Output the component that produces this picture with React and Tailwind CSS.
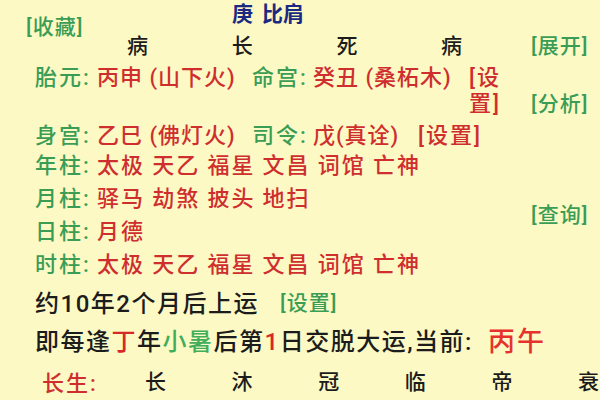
const pillars = [
    { label: '年柱:', words: ['太极', '天乙', '福星', '文昌', '词馆', '亡神'] },
    { label: '月柱:', words: ['驿马', '劫煞', '披头', '地扫'] },
    { label: '日柱:', words: ['月德'] },
    { label: '时柱:', words: ['太极', '天乙', '福星', '文昌', '词馆', '亡神'] },
];

const stages = ['长', '沐', '冠', '临', '帝', '衰'];

const App = () => {
    return (
        <div className="w-[600px] h-[400px] overflow-hidden bg-[#fdf9c5] text-[#1c1c1c] font-medium [font-family:Roboto,'Noto_Sans_CJK_SC',sans-serif]">
            <div className="flex">
                <div className="w-[531px] shrink-0">
                    <div className="flex h-[36px] items-start">
                        <span className="w-[232px] shrink-0 pl-[26px] mt-[16px] text-[21px] leading-[22px] tracking-[1px] text-[#3a9d55]">[收藏]</span>
                        <span className="mt-[3px] text-[21px] leading-[22px] font-semibold text-[#1b2a80]">
                            庚<span className="ml-[9px]">比肩</span>
                        </span>
                    </div>

                    <div className="flex h-[20px] items-center pl-[127px] text-[21px] leading-[20px]">
                        {['病', '长', '死', '病'].map((c, i) => (
                            <span key={i} className="w-[104.7px] shrink-0">{c}</span>
                        ))}
                    </div>

                    <div className="flex items-start mt-[9px] text-[22px] leading-[26px] tracking-[2px] whitespace-nowrap">
                        <span className="w-[97px] shrink-0 pl-[35px] text-[#3a9d55]">胎元:</span>
                        <span className="w-[155px] shrink-0 tracking-[1px] text-[#cf2e2e]">丙申 (山下火)</span>
                        <span className="w-[61px] shrink-0 text-[#3a9d55]">命宫:</span>
                        <span className="w-[158px] shrink-0 tracking-[1px] text-[#cf2e2e]">癸丑 (桑柘木)</span>
                        <span className="w-[30px] shrink-0 flex flex-col items-end text-[#cf2e2e]">
                            <span>[设</span>
                            <span>置]</span>
                        </span>
                    </div>

                    <div className="flex items-start mt-[6px] text-[22px] leading-[26px] tracking-[2px] whitespace-nowrap">
                        <span className="w-[97px] shrink-0 pl-[35px] text-[#3a9d55]">身宫:</span>
                        <span className="w-[155px] shrink-0 tracking-[1px] text-[#cf2e2e]">乙巳 (佛灯火)</span>
                        <span className="w-[61px] shrink-0 text-[#3a9d55]">司令:</span>
                        <span className="w-[105px] shrink-0 tracking-[1px] text-[#cf2e2e]">戊(真诠)</span>
                        <span className="text-[#cf2e2e]">[设置]</span>
                    </div>

                    {pillars.map((p) => (
                        <div key={p.label} className="flex items-center h-[33px] text-[22px] leading-[33px] tracking-[2px] whitespace-nowrap">
                            <span className="w-[97px] shrink-0 pl-[35px] text-[#3a9d55]">{p.label}</span>
                            {p.words.map((w, i) => (
                                <span key={i} className="w-[55.2px] shrink-0 text-[#cf2e2e]">{w}</span>
                            ))}
                        </div>
                    ))}
                </div>

                <div className="w-[69px] shrink-0 flex flex-col text-[21px] leading-[22px] tracking-[1px] whitespace-nowrap text-[#3a9d55]">
                    <span className="mt-[35px]">[展开]</span>
                    <span className="mt-[36px]">[分析]</span>
                    <span className="mt-[89px]">[查询]</span>
                </div>
            </div>

            <div className="flex items-center mt-[4px] h-[38px] pl-[35px] whitespace-nowrap">
                <span className="w-[245px] shrink-0 text-[24px] tracking-[1.5px]">约10年2个月后上运</span>
                <span className="text-[21px] tracking-[1px] text-[#3a9d55]">[设置]</span>
            </div>

            <div className="flex items-center h-[38px] pl-[35px] whitespace-nowrap">
                <span className="w-[453px] shrink-0 text-[24px] tracking-[1.5px]">
                    即每逢<span className="text-[#d62828]">丁</span>年<span className="text-[#3fae5c]">小暑</span>后第<span className="text-[#d62828]">1</span>日交脱大运,当前:
                </span>
                <span className="text-[27px] tracking-[2px] text-[#e5322c]">丙午</span>
            </div>

            <div className="flex items-center h-[44px] whitespace-nowrap">
                <span className="w-[145px] shrink-0 pl-[42px] text-[22px] tracking-[2px] text-[#cf2e2e]">长生:</span>
                {stages.map((s) => (
                    <span key={s} className="w-[86.6px] shrink-0 text-[21px]">{s}</span>
                ))}
            </div>
        </div>
    );
};

export default App;
